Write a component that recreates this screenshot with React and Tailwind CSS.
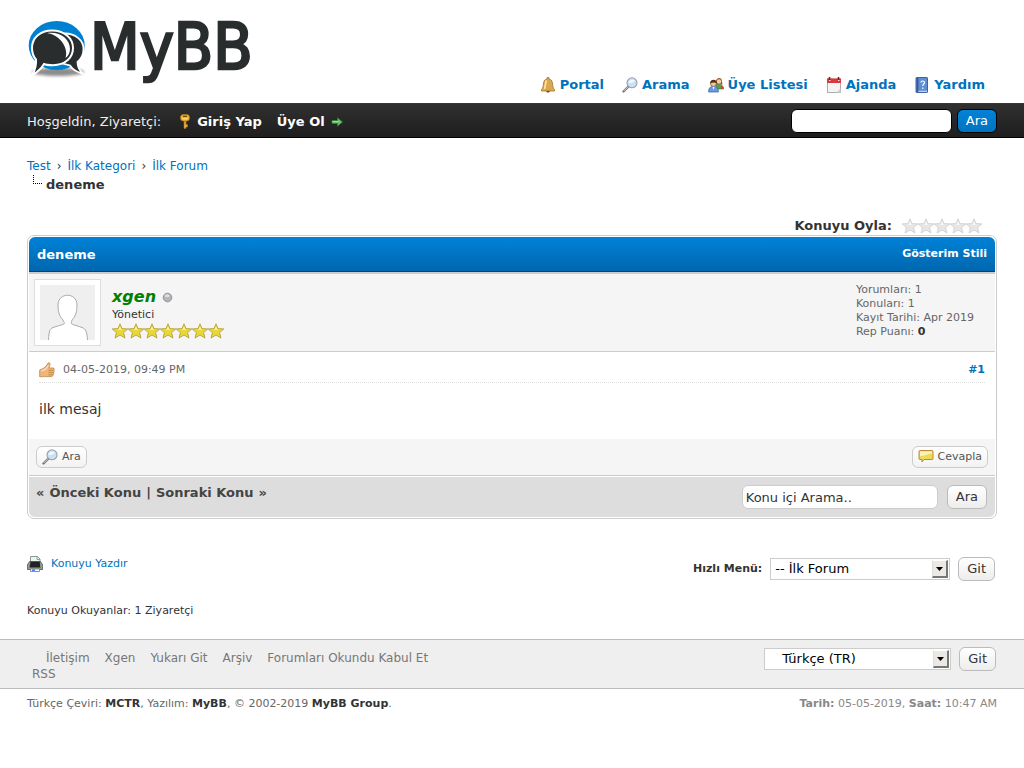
import React from "react";

const STAR = "M8 0.8 L10 5.6 L15.8 5.900 L11.6 9.6 L13 15 L8 12 L3 15 L4.4 9.6 L0.2 5.900 L6 5.6 Z";

function Logo() {
  return (
    <svg className="block h-[74px] w-[228px] overflow-visible" viewBox="0 0 228 74" role="img" aria-label="MyBB">
      <defs>
        <filter id="soft" x="-20%" y="-50%" width="140%" height="200%">
          <feGaussianBlur stdDeviation="1.6" />
        </filter>
      </defs>
      <ellipse cx="31" cy="52" rx="26" ry="4" fill="#000" opacity="0.45" filter="url(#soft)" />
      <ellipse cx="29.700" cy="25.500" rx="28" ry="24.500" fill="#0080d0" />
      <path d="M38 13.500 C48 13.500 56.500 20 56.500 29 C56.500 35 54 39 50.500 42 C50.500 46 52 50 55.500 53.500 C49 52 45 48.500 43 45.500 L34 43 Z" fill="#292d2e" stroke="#fff" strokeWidth="1.800" />
      <path d="M25 10.500 C37 10.500 46 18 46 28 C46 38 38 45.200 26 45.200 C22 45.200 19 45 17 44 C14 49 9 53 5 55.500 C8 50 9.500 44 9 39.500 C6 36 5 33 5 28 C5 18 13 10.500 25 10.500 Z" fill="#292d2e" stroke="#fff" strokeWidth="2" />
      <path d="M20 13 C33 11 43 19 43 29 C43 33 41 36.500 38.500 38 C42 27 32 14.500 20 13 Z" fill="#fff" />
      <text x="63" y="49" fontFamily="'DejaVu Sans Condensed', 'DejaVu Sans', sans-serif" fontSize="64" fill="#292d2e" stroke="#292d2e" strokeWidth="2.500">MyBB</text>
    </svg>
  );
}

function Icon({ children, className = "" }) {
  return (
    <svg className={"h-4 w-4 shrink-0 " + className} viewBox="0 0 16 16" aria-hidden="true">
      {children}
    </svg>
  );
}

const BellIcon = () => (
  <Icon>
    <path d="M7 0.600 H9 V2 C12 2.500 12.500 5 12.700 8 C12.900 10.500 13.500 11.500 14.500 12.500 V14 H1.500 V12.500 C2.500 11.500 3.100 10.500 3.300 8 C3.500 5 4 2.500 7 2 Z" fill="#d9a850" stroke="#a5742c" strokeWidth="0.800" />
    <path d="M6.500 3.500 C5.500 5 5.500 9 4.500 12" stroke="#ffe9a8" strokeWidth="1.600" fill="none" />
    <path d="M6 14 H10 L9 15.600 H7 Z" fill="#7a4a12" />
  </Icon>
);

const SearchIcon = ({ className }) => (
  <Icon className={className}>
    <path d="M1.500 14.500 L6 10" stroke="#777" strokeWidth="2.400" strokeLinecap="round" />
    <path d="M1.800 14 L6 9.800" stroke="#ccc" strokeWidth="1" />
    <circle cx="10" cy="5.800" r="5" fill="#c9e0f5" stroke="#999eaa" strokeWidth="1.100" />
    <path d="M6.500 6 C7 3 10 2 13 3.500 C12 5.500 9.500 6 6.500 6 Z" fill="#f3f9ff" />
  </Icon>
);

const UsersIcon = () => (
  <Icon>
    <path d="M7.500 6.500 C7 0 14.500 -1 14 5 L14.700 7.500 H8 Z" fill="#9b5a2a" />
    <circle cx="11" cy="4.500" r="2.200" fill="#f6cfa2" />
    <path d="M8 8 C10 6.800 15.500 7 15.500 12 H9 Z" fill="#57a343" stroke="#38762a" strokeWidth="0.600" />
    <path d="M13 8 L15.500 10 V12 H13 Z" fill="#c9443a" />
    <circle cx="5.500" cy="6.500" r="3" fill="#f4c593" stroke="#6d451f" strokeWidth="0.700" />
    <path d="M2.300 6.500 C1.500 1.500 9.500 1.500 8.700 6.500 C7 5 4 5.200 2.300 6.500 Z" fill="#4c3118" />
    <path d="M0.600 15 C0.600 10 3 9.500 5.500 9.500 C8 9.500 10.400 10 10.400 15 Z" fill="#6b99e0" stroke="#315da8" strokeWidth="0.700" />
    <path d="M4.500 9.700 H6.500 L5.500 13 Z" fill="#fff" />
  </Icon>
);

const CalendarIcon = () => (
  <Icon>
    <rect x="1.500" y="2" width="13" height="13.500" fill="#f4f4f4" stroke="#999" strokeWidth="0.800" />
    <rect x="1" y="1.500" width="14" height="4.500" fill="#d83b3f" />
    <path d="M3.500 0 V3 M12.500 0 V3" stroke="#8d1519" strokeWidth="1.600" />
    <path d="M3 3.500 H4.500 M12 3.500 H13.500" stroke="#fff" strokeWidth="0.800" />
    <path d="M10.500 15.500 L14.500 11.500 V15.500 Z" fill="#cfcfcf" />
  </Icon>
);

const HelpIcon = () => (
  <Icon>
    <rect x="2" y="0.500" width="11.500" height="15" rx="0.600" fill="#5f8ed3" stroke="#345896" strokeWidth="0.900" />
    <path d="M3.500 1 V15" stroke="#355b9d" strokeWidth="1.800" />
    <path d="M4.500 14.300 H13" stroke="#e9eef8" strokeWidth="0.900" />
    <path d="M7 5.500 C7 3.500 10.500 3.500 10.500 5.500 C10.500 7 8.800 7 8.800 9 M8.800 10.500 V12" stroke="#fff" strokeWidth="1.200" fill="none" />
  </Icon>
);

const KeyIcon = () => (
  <Icon>
    <path d="M7 7 V14 L8 15 L9 14 V13 H10.500 V10.500 H9 V7 Z" fill="#e8b13a" stroke="#a86a10" strokeWidth="0.600" />
    <rect x="3.500" y="0.500" width="9" height="6.500" rx="3" fill="#f0b83b" stroke="#b57512" strokeWidth="0.800" />
    <path d="M6 2.300 H10" stroke="#6a4308" strokeWidth="1.300" />
    <path d="M5.300 4.800 H10.500" stroke="#ffe79a" strokeWidth="0.900" />
  </Icon>
);

const ArrowIcon = () => (
  <Icon>
    <path d="M3 6.600 H8.500 V3.800 L13.500 8 L8.500 12.200 V9.400 H3 Z" fill="#6cc168" stroke="#2f7d32" strokeWidth="0.800" />
    <path d="M3.500 7.600 H9.500" stroke="#b2e8a8" strokeWidth="0.900" />
  </Icon>
);

const ThumbIcon = () => (
  <Icon>
    <path d="M0.700 8 L3.500 6.800 C6 5.500 8 3.500 9 1 C10.500 0.200 11.800 1.500 10.500 4.200 L10 6 H14 C15.600 6 15.600 8 14.800 8.400 C15.500 9 15.300 10.400 14.500 10.700 C15 11.500 14.600 12.700 13.800 12.900 C14 14 13.300 14.600 12.300 14.600 H5.500 L0.700 14.800 Z" fill="#eeb67b" stroke="#c08443" strokeWidth="0.800" strokeLinejoin="round" />
    <path d="M9.500 8.400 H14.400 M9.500 10.600 H14.300 M9.500 12.800 H13.600" stroke="#b87732" strokeWidth="0.700" />
    <path d="M2 9 C5 8.500 7.500 7 9.500 3.500" stroke="#ffe2bd" strokeWidth="1.200" fill="none" />
  </Icon>
);

const CommentIcon = () => (
  <Icon>
    <path d="M2 1.500 H14 Q15 1.500 15 2.500 V9.500 Q15 10.500 14 10.500 H6 L4 13 V10.500 H2 Q1 10.500 1 9.500 V2.500 Q1 1.500 2 1.500 Z" fill="#eadb5a" stroke="#ba7b35" strokeWidth="0.900" />
    <path d="M2 7 C6 7 9 5 14 4.500 V2.500 H2 Z" fill="#fbf3b8" />
  </Icon>
);

const PrinterIcon = () => (
  <Icon>
    <path d="M3.500 0.500 H10.500 L13 3 V7 H3.500 Z" fill="#e9f5ef" stroke="#7a9087" strokeWidth="0.900" />
    <path d="M10 1 V3.500 H13" stroke="#7a9087" strokeWidth="0.800" fill="none" />
    <path d="M2.500 5.500 H13.500 L15.700 9 V13.500 H0.300 V9 Z" fill="#97999c" stroke="#4b4d50" strokeWidth="0.800" />
    <path d="M3.500 5.700 H12.700 L13.500 11.500 H2.500 Z" fill="#202326" />
    <path d="M3.500 13 H12.500 V15.500 H3.500 Z" fill="#fff" stroke="#777" strokeWidth="0.800" />
    <path d="M5 14.200 H8" stroke="#226bf0" strokeWidth="1.300" />
    <path d="M13.200 9.800 H14.500" stroke="#4ee24c" strokeWidth="1.200" />
  </Icon>
);

function Star({ gold }) {
  return (
    <Icon>
      <path d={STAR} fill={gold ? "#e6d835" : "#e6e6e6"} stroke={gold ? "#b3943b" : "#cbcbcb"} strokeWidth="0.800" />
      <path d="M8 3 L9.400 6.700 L13 7 L3 7 L6.600 6.700 Z" fill={gold ? "#f8f2a2" : "#f8f8f8"} />
    </Icon>
  );
}

function Button({ children }) {
  return (
    <button type="button" className="h-6 rounded-md border border-[#bbb] bg-linear-to-b from-white to-[#ededed] px-2 text-[13px] leading-5 text-[#333]">
      {children}
    </button>
  );
}

function Select({ id, label, className, children }) {
  return (
    <div className="relative">
      <select id={id} aria-label={label} className={"block h-[22px] appearance-none border border-[#ccc] bg-white pr-5 text-[13px] leading-5 text-black outline-none " + className}>
        {children}
      </select>
      <span className="pointer-events-none absolute top-0.5 right-0.5 flex h-[18px] w-4 items-center justify-center border-t border-r-2 border-b-2 border-l border-t-white border-r-[#777] border-b-[#777] border-l-[#ddd] bg-[#ece9e4]">
        <svg className="h-1 w-[7px]" viewBox="0 0 7 4" aria-hidden="true">
          <path d="M0 0 H7 L3.500 4 Z" fill="#000" />
        </svg>
      </span>
    </div>
  );
}

const topLinks = [
  ["Portal", BellIcon],
  ["Arama", SearchIcon],
  ["Üye Listesi", UsersIcon],
  ["Ajanda", CalendarIcon],
  ["Yardım", HelpIcon],
];

export default function App() {
  return (
    <div className="bg-white font-['DejaVu_Sans',Verdana,sans-serif] text-[13px] leading-[18px] text-[#333]">
      <header>
        <div className="flex justify-between px-[27px] pt-5 pb-[9px]">
          <a href="#home"><Logo /></a>
          <nav className="flex items-start gap-[18px] pt-14 pr-3 font-bold text-[#0072bc]">
            {topLinks.map(([name, Glyph]) => (
              <a key={name} href="#nav" className="flex items-center gap-1 whitespace-nowrap">
                <Glyph />
                {name}
              </a>
            ))}
          </nav>
        </div>
        <div className="flex h-[35px] items-center justify-between border-t border-b border-t-[#2f3b38] border-b-black bg-linear-to-b from-[#303030] to-[#1e1e1e] px-[27px] text-white">
          <div className="flex items-center pt-0.5">
            <span className="text-[#eee]">Hoşgeldin, Ziyaretçi:</span>
            <a href="#login" className="ml-4 flex items-center gap-1 font-bold"><KeyIcon />Giriş Yap</a>
            <a href="#register" className="ml-[15px] flex items-center gap-1 font-bold">Üye Ol<ArrowIcon /></a>
          </div>
          <form className="flex items-center gap-[5px]">
            <input type="text" aria-label="Arama" className="h-6 w-[161px] rounded-md border border-black bg-white px-1 text-[#333] outline-none" />
            <button type="button" className="h-6 rounded-md border border-black bg-linear-to-b from-[#0083d8] to-[#0073c0] px-2 leading-5 text-white">Ara</button>
          </form>
        </div>
      </header>

      <main className="px-[27px] pt-[19px]">
        <nav aria-label="Konum" className="text-[12px]">
          <div className="flex gap-1.5 leading-[18px]">
            <a href="#test" className="text-[#0072bc]">Test</a>
            <span>›</span>
            <a href="#category" className="text-[#0072bc]">İlk Kategori</a>
            <span>›</span>
            <a href="#forum" className="text-[#0072bc]">İlk Forum</a>
          </div>
          <div className="flex items-start pl-1.5">
            <span className="mr-1 h-[9px] w-[9px] border-b border-l border-dotted border-black" />
            <span className="text-[13px] leading-5 font-bold">deneme</span>
          </div>
        </nav>

        <div className="mt-[22px] flex items-center justify-end gap-2.5 pr-[15px] font-bold">
          Konuyu Oyla:
          <span className="flex">{[0, 1, 2, 3, 4].map((i) => <Star key={i} />)}</span>
        </div>

        <section className="overflow-hidden rounded-[7px] border border-[#ccc] p-px">
          <div className="flex items-center justify-between rounded-t-md border-b border-[#263c30] bg-linear-to-b from-[#0083d8] to-[#0066ae] px-2 pt-[9px] pb-[7px] font-bold text-white">
            <h1 className="text-[13px] leading-[18px]">deneme</h1>
            <a href="#mode" className="pb-0.5 text-[11px] leading-[14px]">Gösterim Stili</a>
          </div>

          <article>
            <div className="flex items-start border-t-2 border-b border-[#ccc] bg-[#f5f5f5] p-[5px]">
              <a href="#avatar" className="border border-[#ddd] bg-white p-[5px]">
                <svg className="block h-[55px] w-[55px]" viewBox="0 0 55 55" role="img" aria-label="xgen">
                  <rect width="55" height="55" fill="#efefef" />
                  <path d="M8.500 55 C9 45 10 44 13 42.500 C27 38 25 40 23 35 C19 31 18 26 18 20 C18 7 37 7 37 20 C37 26 36 31 32 35 C31 40 29 38 42 42.500 C46 44 47 47 47.500 55 Z" fill="#fff" stroke="#aaa" strokeWidth="1" />
                  <path d="M9 54.500 H47" stroke="#fff" strokeWidth="2" />
                </svg>
              </a>
              <div className="ml-[11px] pt-2 text-[11px] leading-4">
                <div className="flex items-center gap-1.5">
                  <a href="#xgen" className="text-[16px] leading-5 font-bold text-[#008000] italic">xgen</a>
                  <svg className="h-[11px] w-[11px]" viewBox="0 0 11 11" aria-hidden="true">
                    <circle cx="5.500" cy="5.500" r="4.300" fill="#b3b3b8" stroke="#8d8d91" strokeWidth="0.900" />
                    <ellipse cx="5.200" cy="3.800" rx="2.500" ry="1.500" fill="#dedee2" />
                  </svg>
                </div>
                <div>Yönetici</div>
                <div className="flex">{[0, 1, 2, 3, 4, 5, 6].map((i) => <Star key={i} gold />)}</div>
              </div>
              <div className="ml-auto pt-1 pr-4 text-[11px] leading-[14px] text-[#666]">
                <div>Yorumları: 1</div>
                <div>Konuları: 1</div>
                <div>Kayıt Tarihi: Apr 2019</div>
                <div>Rep Puanı: <b className="text-[#333]">0</b></div>
              </div>
            </div>

            <div className="px-2.5 pt-[9px] pb-1">
              <div className="flex items-center justify-between border-b border-dotted border-[#ddd] pb-[3px] text-[11px] text-[#666]">
                <span className="flex items-center gap-2"><ThumbIcon />04-05-2019, 09:49 PM</span>
                <a href="#post-1" className="font-bold text-[#0072bc]">#1</a>
              </div>
              <div className="py-4 text-[14px] leading-5">ilk mesaj</div>
            </div>

            <div className="flex justify-between border-b border-[#ccc] bg-[#f5f5f5] px-[7px] py-[7px] text-[11px] text-[#555]">
              <a href="#find" className="flex h-[22px] items-center gap-1 rounded-md border border-[#ccc] bg-linear-to-b from-white to-[#f2f2f2] px-[5px]"><SearchIcon />Ara</a>
              <a href="#reply" className="flex h-[22px] items-center gap-1 rounded-md border border-[#ccc] bg-linear-to-b from-white to-[#f2f2f2] px-[5px]"><CommentIcon />Cevapla</a>
            </div>
          </article>

          <div className="mt-px flex items-start justify-between rounded-b-md bg-[#ddd] py-2 pr-2 pl-[7px]">
            <div className="flex gap-[5px] leading-4 font-bold text-[#444]">
              <span>«</span>
              <a href="#previous">Önceki Konu</a>
              <span>|</span>
              <a href="#next">Sonraki Konu</a>
              <span>»</span>
            </div>
            <form className="flex gap-[9px]">
              <input type="text" aria-label="Konu içi Arama" defaultValue="Konu içi Arama.." className="h-6 w-[196px] rounded-md border border-[#ccc] bg-white px-[3px] text-[#333] outline-none" />
              <Button>Ara</Button>
            </form>
          </div>
        </section>

        <div className="mt-9 flex items-start justify-between">
          <a href="#print" className="flex items-center gap-2 text-[11px] text-[#0072bc]"><PrinterIcon />Konuyu Yazdır</a>
          <form className="mt-0.5 flex items-center gap-2 pr-0.5">
            <label htmlFor="jump" className="text-[11px] font-bold">Hızlı Menü:</label>
            <Select id="jump" className="w-[180px] pl-1">
              <option>-- İlk Forum</option>
            </Select>
            <Button>Git</Button>
          </form>
        </div>
        <p className="mt-[21px] pb-[19px] text-[11px]">Konuyu Okuyanlar: 1 Ziyaretçi</p>
      </main>

      <footer>
        <div className="flex items-start justify-between border-t border-b border-[#bbb] bg-[#efefef] px-[27px] pt-[7px] pb-1.5">
          <div className="pt-[3px] pl-[5px] text-[12px] leading-4 text-[#777]">
            <div className="flex gap-[15px] pl-[14px]">
              <a href="#contact">İletişim</a>
              <a href="#site">Xgen</a>
              <a href="#top">Yukarı Git</a>
              <a href="#archive">Arşiv</a>
              <a href="#read">Forumları Okundu Kabul Et</a>
            </div>
            <a href="#rss" className="block">RSS</a>
          </div>
          <form className="flex items-center gap-2 pr-px">
            <Select label="Dil" className="w-[187px] pl-[17px]">
              <option>Türkçe (TR)</option>
            </Select>
            <Button>Git</Button>
          </form>
        </div>
        <div className="flex justify-between px-[27px] pt-1.5 text-[11px] text-[#666]">
          <span>Türkçe Çeviri: <a href="#mctr" className="font-bold text-[#333]">MCTR</a>, Yazılım: <a href="#mybb" className="font-bold text-[#333]">MyBB</a>, © 2002-2019 <a href="#group" className="font-bold text-[#333]">MyBB Group</a>.</span>
          <span className="text-[#888]"><b>Tarih:</b> 05-05-2019, <b>Saat:</b> 10:47 AM</span>
        </div>
      </footer>
    </div>
  );
}
